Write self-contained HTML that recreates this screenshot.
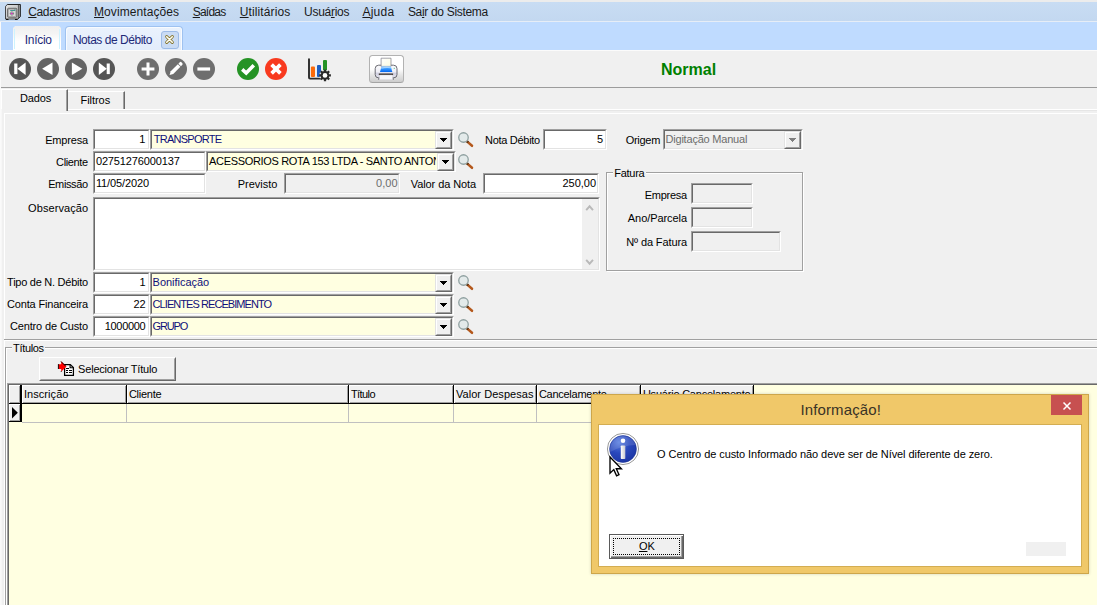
<!DOCTYPE html>
<html lang="pt-BR">
<head>
<meta charset="utf-8">
<title>Notas de Débito</title>
<style>
html,body{margin:0;padding:0;}
body{width:1097px;height:605px;overflow:hidden;position:relative;background:#f0f0f0;font-family:"Liberation Sans",sans-serif;font-size:11px;color:#000;}
.abs{position:absolute;}
svg{position:absolute;overflow:visible;}
.lbl{position:absolute;white-space:nowrap;font-size:11px;}
.mn{position:absolute;white-space:nowrap;font-size:12px;color:#1a1a1a;}
.fld{position:absolute;box-sizing:border-box;background:#fff;border:1px solid;border-color:#a0a0a0 #fff #fff #a0a0a0;overflow:hidden;}
.fld:before{content:"";position:absolute;left:0;top:0;right:0;bottom:0;border:1px solid;border-color:#696969 #e3e3e3 #e3e3e3 #696969;}
.y{background:#ffffe1;}
.g{background:#f0f0f0;}
.dd{position:absolute;box-sizing:border-box;width:17px;height:18px;background:#f0f0f0;border:1px solid;border-color:#e3e3e3 #696969 #696969 #e3e3e3;}
.dd:before{content:"";position:absolute;left:0;top:0;right:0;bottom:0;border:1px solid;border-color:#fff #a0a0a0 #a0a0a0 #fff;}
.dd:after{content:"";position:absolute;left:4px;top:6px;width:7px;height:4px;background:linear-gradient(#000,#000) 0 0/7px 1px no-repeat,linear-gradient(#000,#000) 1px 1px/5px 1px no-repeat,linear-gradient(#000,#000) 2px 2px/3px 1px no-repeat,linear-gradient(#000,#000) 3px 3px/1px 1px no-repeat;}
.dd.dis:after{filter:invert(0.5);}
.grp{position:absolute;box-sizing:border-box;border:1px solid #a0a0a0;box-shadow:1px 1px 0 #fff, inset 1px 1px 0 #fff;}
.gl{position:absolute;background:#f0f0f0;height:3px;}
.btn{position:absolute;box-sizing:border-box;background:#f0f0f0;border:1px solid;border-color:#fff #696969 #696969 #fff;}
.btn:before{content:"";position:absolute;left:0;top:0;right:0;bottom:0;border:1px solid;border-color:#f0f0f0 #a0a0a0 #a0a0a0 #f0f0f0;}
.hc{position:absolute;top:385px;height:18px;box-sizing:content-box;background:#f0f0f0;border-right:1px solid #000;border-bottom:1px solid #000;box-shadow:inset 1px 1px 0 #fff, inset -1px -1px 0 #a0a0a0;}
.vl{position:absolute;top:404px;width:1px;height:18px;background:#c0c0c0;}
</style>
</head>
<body>
<div class="abs" style="left:0;top:0;width:1097px;height:2px;background:#ececec"></div>
<div class="abs" style="left:0;top:2px;width:1097px;height:19px;background:linear-gradient(#c8dcf3,#c3d8f0)"></div>
<div class="abs" style="left:0;top:21px;width:1097px;height:1px;background:#e6edf6"></div>
<div class="abs" style="left:0;top:50px;width:1097px;height:1px;background:#fbfbfb"></div>
<svg style="left:5px;top:4px" width="17" height="17" viewBox="0 0 17 17">
<defs><linearGradient id="sf" x1="0" y1="0" x2="1" y2="1"><stop offset="0" stop-color="#e2e2e2"/><stop offset="1" stop-color="#b4b4b4"/></linearGradient></defs>
<path d="M0.6 2.2 L2.4 0.5 H15.4 V12.6 L13 14.9 H0.6 Z" fill="#9a9a9a" stroke="#161616" stroke-width="0.9" stroke-linejoin="round"/>
<path d="M0.9 2.4 L2.4 1 H13.2 V14.5 H0.9 Z" fill="url(#sf)"/>
<path d="M13.4 1 V14.6" stroke="#3c3c3c" stroke-width="0.7"/>
<rect x="2.6" y="4.3" width="9.2" height="8.9" rx="0.8" fill="#cfcfcf" stroke="#4a4a4a" stroke-width="0.8"/>
<rect x="3.6" y="5.2" width="7.2" height="7.1" fill="#d9d9d9" stroke="#8a8a8a" stroke-width="0.4"/>
<path d="M5.2 6 H9.6 V5.2 H10.3 V6.8 H5.2 Z" fill="#15867e"/>
<circle cx="6.9" cy="9.5" r="1.7" fill="#f2f2f2" stroke="#555" stroke-width="0.5"/>
<path d="M5.2 9.5 H8.8 M6.9 7.9 V11.2" stroke="#444" stroke-width="0.5"/>
<rect x="6" y="8.9" width="1.4" height="1.3" fill="#f018d8"/>
<rect x="0.9" y="15" width="2.6" height="1" fill="#161616"/><rect x="10" y="15" width="2.6" height="1" fill="#161616"/>
</svg>
<div class="mn" style="top:5.04px;line-height:14px;font-size:12px;letter-spacing:-0.338px;left:28.20px;"><u>C</u>adastros</div>
<div class="mn" style="top:5.04px;line-height:14px;font-size:12px;letter-spacing:0.079px;left:94.00px;"><u>M</u>ovimentações</div>
<div class="mn" style="top:5.04px;line-height:14px;font-size:12px;letter-spacing:-0.755px;left:192.70px;"><u>S</u>aídas</div>
<div class="mn" style="top:5.04px;line-height:14px;font-size:12px;letter-spacing:0.114px;left:239.80px;"><u>U</u>tilitários</div>
<div class="mn" style="top:5.04px;line-height:14px;font-size:12px;letter-spacing:-0.294px;left:304.10px;">Usuá<u>r</u>ios</div>
<div class="mn" style="top:5.04px;line-height:14px;font-size:12px;letter-spacing:0.274px;left:362.40px;"><u>A</u>juda</div>
<div class="mn" style="top:5.04px;line-height:14px;font-size:12px;letter-spacing:-0.316px;left:407.90px;">Sa<u>i</u>r do Sistema</div>
<div class="abs" style="left:0;top:22px;width:1097px;height:28px;background:#bfdbff"></div>
<div class="abs" style="left:13px;top:26px;width:48px;height:25px;background:linear-gradient(#efefef,#f4f4f4 30%,#ffffff 62%);clip-path:polygon(0 2px,2px 0,46px 0,48px 2px,48px 100%,0 100%)"></div>
<div class="abs" style="left:14px;top:29px;width:1px;height:20px;background:#cdf3ff"></div><div class="abs" style="left:59px;top:29px;width:1px;height:20px;background:#cdf3ff"></div>
<div class="mn" style="top:32.64px;line-height:14px;font-size:12px;letter-spacing:-0.277px;color:#1e2a78;left:24.70px;">Início</div>
<div class="abs" style="left:65px;top:26px;width:118px;height:24px;box-sizing:border-box;border:1px solid #9fc2f0;border-bottom:none;border-radius:4px 4px 0 0;background:linear-gradient(#eaf2fd,#e3edfb);box-shadow:inset 1px 1px 0 #f8fbff, inset -1px 0 0 #f8fbff"></div>
<div class="mn" style="top:32.64px;line-height:14px;font-size:12px;letter-spacing:-0.469px;color:#1e2a78;left:72.90px;">Notas de Débito</div>
<div class="abs" style="left:161px;top:31px;width:18px;height:18px;box-sizing:border-box;border:1px solid #9dbbe6;border-radius:3px;background:#c9dbf4"></div>
<svg style="left:161px;top:31px" width="18" height="18" viewBox="0 0 18 18"><path d="M5.7 5.7 L11.3 11.3 M11.3 5.7 L5.7 11.3" stroke="#85752c" stroke-width="3.1" stroke-linecap="round"/><path d="M5.7 5.7 L11.3 11.3 M11.3 5.7 L5.7 11.3" stroke="#fffef4" stroke-width="1.55" stroke-linecap="round"/></svg>
<div class="abs" style="left:0;top:87px;width:1097px;height:1px;background:#9c9c9c"></div>
<svg style="left:9px;top:58px" width="22" height="22" viewBox="0 0 22 22"><circle cx="11" cy="11" r="11" fill="#555555"/><rect x="5.2" y="5.5" width="3.2" height="10.6" fill="#fff"/><path d="M16.6 4.5 V16.9 L8.4 10.7 Z" fill="#fff"/></svg>
<svg style="left:37px;top:58px" width="22" height="22" viewBox="0 0 22 22"><circle cx="11" cy="11" r="11" fill="#646464"/><path d="M15.5 4.5 V16.9 L5.1 10.7 Z" fill="#fff"/></svg>
<svg style="left:65px;top:58px" width="22" height="22" viewBox="0 0 22 22"><circle cx="11" cy="11" r="11" fill="#646464"/><path d="M6.9 4.5 V16.9 L17.3 10.7 Z" fill="#fff"/></svg>
<svg style="left:93px;top:58px" width="22" height="22" viewBox="0 0 22 22"><circle cx="11" cy="11" r="11" fill="#555555"/><rect x="13.7" y="5.5" width="3.1" height="10.6" fill="#fff"/><path d="M5.8 4.5 V16.9 L13.8 10.7 Z" fill="#fff"/></svg>
<svg style="left:137px;top:58px" width="22" height="22" viewBox="0 0 22 22"><circle cx="11" cy="11" r="11" fill="#6e6e6e"/><path d="M11 4.6 V17.4 M4.6 11 H17.4" stroke="#fff" stroke-width="3"/></svg>
<svg style="left:165px;top:58px" width="22" height="22" viewBox="0 0 22 22"><circle cx="11" cy="11" r="11" fill="#6e6e6e"/><g transform="translate(10.8,10.8) rotate(-45)"><path d="M-8.8 0 L-5.4 -1.8 H4.7 V1.8 H-5.4 Z" fill="#fff"/><path d="M5.5 -1.8 H7.4 Q8.6 -1.8 8.6 -0.6 V0.6 Q8.6 1.8 7.4 1.8 H5.5 Z" fill="#fff"/></g></svg>
<svg style="left:193px;top:58px" width="22" height="22" viewBox="0 0 22 22"><circle cx="11" cy="11" r="11" fill="#6e6e6e"/><path d="M4.4 11 H17.1" stroke="#fff" stroke-width="3.2"/></svg>
<svg style="left:237px;top:58px" width="22" height="22" viewBox="0 0 22 22"><circle cx="11" cy="11" r="11" fill="#259325"/><path d="M5.2 11.4 L9.2 15 L16.8 7.2" fill="none" stroke="#fff" stroke-width="3.5"/></svg>
<svg style="left:265px;top:58px" width="22" height="22" viewBox="0 0 22 22"><circle cx="11" cy="11" r="11" fill="#f83a1f"/><path d="M6.6 6.6 L15.4 15.4 M15.4 6.6 L6.6 15.4" stroke="#fff" stroke-width="3.7"/></svg>
<svg style="left:306px;top:57px" width="26" height="26" viewBox="0 0 26 26">
<path d="M3 2.2 V20.6 Q3 21.6 4 21.6 H14.6" fill="none" stroke="#2a2a2a" stroke-width="1.9" stroke-linecap="round"/>
<rect x="4.9" y="9.6" width="4.1" height="10.4" rx="1" fill="#fb6a0a"/>
<rect x="11" y="7.9" width="4" height="12.1" rx="1" fill="#1c5ec2"/>
<rect x="17" y="3" width="4" height="12.4" rx="1" fill="#259325"/>
<g transform="translate(19,18.4)">
<circle r="5.7" fill="#f0f0f0" opacity="0.85"/>
<circle r="4.3" fill="#2a2a2a"/>
<g stroke="#2a2a2a" stroke-width="2.3"><path d="M0 -5.9 V5.9 M-5.9 0 H5.9 M-4.15 -4.15 L4.15 4.15 M4.15 -4.15 L-4.15 4.15"/></g>
<circle r="2.35" fill="#ffffff"/>
</g></svg>
<div class="abs" style="left:369px;top:55px;width:35px;height:28px;box-sizing:border-box;border:1px solid #b2b2b2;border-bottom-color:#a4a4a4;border-radius:3.5px;background:linear-gradient(#ffffff 0%,#ffffff 50%,#e6e6e6 72%,#cdcdcd 100%)"></div>
<svg style="left:369px;top:55px" width="35" height="28" viewBox="0 0 35 28">
<defs><linearGradient id="pb" x1="0" y1="0" x2="0" y2="1"><stop offset="0" stop-color="#fbfbfd"/><stop offset="0.55" stop-color="#eeeef6"/><stop offset="0.62" stop-color="#cfcfe0"/><stop offset="1" stop-color="#e4e4ee"/></linearGradient>
<linearGradient id="bl" x1="0" y1="0" x2="0" y2="1"><stop offset="0" stop-color="#a8d6ff"/><stop offset="0.4" stop-color="#3a9cff"/><stop offset="1" stop-color="#0468f4"/></linearGradient>
<linearGradient id="pp" x1="0" y1="0" x2="1" y2="1"><stop offset="0" stop-color="#ffffff"/><stop offset="1" stop-color="#fdfde0"/></linearGradient></defs>
<path d="M9.6 10.2 H24.6 Q28 10.2 28 13.6 V19.6 Q28 22.8 24.8 22.8 H9.4 Q6.2 22.8 6.2 19.6 V13.6 Q6.2 10.2 9.6 10.2 Z" fill="url(#pb)" stroke="#5c5c64" stroke-width="0.9"/>
<path d="M12.1 11.4 V3.2 H22 V11.4 Z" fill="url(#pp)" stroke="#7c7c88" stroke-width="0.7"/>
<path d="M12.6 11.2 H21.8 L23.3 16.9 H11 Z" fill="url(#bl)"/>
<path d="M12.6 12.4 Q17 11.2 21.9 12.2 L22.2 13.4 Q17 12.6 12.2 14 Z" fill="#d6ecff" opacity="0.55"/>
<rect x="9.8" y="18.5" width="14.3" height="1.5" fill="#3c3634"/>
<path d="M10.6 20 H23.5 L23.9 24.7 H10.1 Z" fill="#f7f7fb" stroke="#c4c4d0" stroke-width="0.4"/>
<path d="M9.7 22.8 V25 M24.3 22.8 V25" stroke="#6a6a74" stroke-width="0.7"/>
<rect x="24.7" y="12.8" width="1.3" height="1.1" fill="#7fd0a8"/>
</svg>
<div class="lbl" style="top:59.66px;line-height:19px;font-size:16px;letter-spacing:-0.025px;color:#008000;font-weight:bold;left:661.10px;">Normal</div>
<div class="abs" style="left:1px;top:89px;width:67px;height:22px;box-sizing:border-box;border-top:1px solid #fff;border-left:1px solid #fff;border-right:1px solid #696969;box-shadow:inset -1px 0 0 #a0a0a0"></div>
<div class="abs" style="left:68px;top:91px;width:57px;height:18px;box-sizing:border-box;border-top:1px solid #fff;border-right:1px solid #696969;box-shadow:inset -1px 0 0 #a0a0a0"></div>
<div class="abs" style="left:68px;top:109px;width:1029px;height:1px;background:#fff"></div>
<div class="abs" style="left:68px;top:110px;width:1029px;height:1px;background:#e6e6e6"></div>
<div class="abs" style="left:0px;top:22px;width:1px;height:583px;background:#fafafa"></div><div class="abs" style="left:1px;top:109px;width:1px;height:496px;background:#f7f7f7"></div>
<div class="lbl" style="top:92.29px;line-height:13px;letter-spacing:-0.099px;left:19.90px;">Dados</div>
<div class="lbl" style="top:94.29px;line-height:13px;letter-spacing:-0.042px;left:80.50px;">Filtros</div>
<div class="abs" style="left:4px;top:113px;width:1093px;height:1px;background:#fff"></div>
<div class="abs" style="left:4px;top:113px;width:1px;height:492px;background:#fff"></div>
<div class="abs" style="left:4px;top:339px;width:1093px;height:1px;background:#a0a0a0"></div>
<div class="abs" style="left:4px;top:340px;width:1093px;height:1px;background:#fff"></div>
<div class="lbl" style="top:134.09px;line-height:13px;letter-spacing:-0.172px;right:1009.07px;">Empresa</div>
<div class="fld " style="left:93px;top:129px;width:57px;height:21px"></div>
<div class="lbl" style="top:132.99px;line-height:13px;right:951.70px;">1</div>
<div class="fld y" style="left:150px;top:129px;width:304px;height:21px"></div>
<div class="lbl" style="top:132.99px;line-height:13px;letter-spacing:-0.720px;color:#10107a;left:153.70px;">TRANSPORTE</div>
<i class="dd" style="left:435px;top:131px;height:18px"></i>
<svg style="left:457.2px;top:130.9px" width="18" height="18" viewBox="0 0 18 18"><path d="M10.3 10.6 L15 14.8" stroke="#b4581c" stroke-width="2.5" stroke-linecap="round"/><path d="M10 10.3 L11.2 11.4" stroke="#5a3414" stroke-width="2.4"/><circle cx="6.5" cy="6.5" r="4.75" fill="#e3eaea" stroke="#8fa0a0" stroke-width="1.3"/></svg>
<div class="lbl" style="top:134.09px;line-height:13px;letter-spacing:-0.289px;left:485.00px;">Nota Débito</div>
<div class="fld " style="left:543px;top:129px;width:64px;height:21px"></div>
<div class="lbl" style="top:132.79px;line-height:13px;right:493.80px;">5</div>
<div class="lbl" style="top:134.09px;line-height:13px;letter-spacing:-0.292px;left:625.70px;">Origem</div>
<div class="fld g" style="left:663px;top:129px;width:140px;height:21px"></div>
<div class="lbl" style="top:133.09px;line-height:13px;letter-spacing:-0.207px;color:#6d6d6d;left:665.50px;">Digitação Manual</div>
<i class="dd dis" style="left:784px;top:131px;height:18px"></i>
<div class="lbl" style="top:156.09px;line-height:13px;letter-spacing:-0.375px;right:1009.27px;">Cliente</div>
<div class="fld " style="left:93px;top:151px;width:113px;height:21px"></div>
<div class="lbl" style="top:155.09px;line-height:13px;letter-spacing:-0.127px;left:95.90px;">02751276000137</div>
<div class="fld y" style="left:206px;top:151px;width:250px;height:21px"></div>
<div class="abs" style="left:208px;top:153px;width:228px;height:17px;overflow:hidden"><div class="lbl" style="top:1.59px;line-height:13px;left:1.10px;letter-spacing:-0.337px;">ACESSORIOS ROTA 153 LTDA - SANTO ANTONIO</div></div>
<i class="dd" style="left:437px;top:153px;height:18px"></i>
<svg style="left:457.2px;top:152.9px" width="18" height="18" viewBox="0 0 18 18"><path d="M10.3 10.6 L15 14.8" stroke="#b4581c" stroke-width="2.5" stroke-linecap="round"/><path d="M10 10.3 L11.2 11.4" stroke="#5a3414" stroke-width="2.4"/><circle cx="6.5" cy="6.5" r="4.75" fill="#e3eaea" stroke="#8fa0a0" stroke-width="1.3"/></svg>
<div class="lbl" style="top:178.09px;line-height:13px;letter-spacing:-0.365px;right:1009.26px;">Emissão</div>
<div class="fld " style="left:93px;top:173px;width:113px;height:21px"></div>
<div class="lbl" style="top:177.09px;line-height:13px;letter-spacing:-0.106px;left:95.90px;">11/05/2020</div>
<div class="lbl" style="top:178.09px;line-height:13px;letter-spacing:0.007px;left:237.70px;">Previsto</div>
<div class="fld g" style="left:284px;top:173px;width:116px;height:21px"></div>
<div class="lbl" style="top:176.89px;line-height:13px;letter-spacing:-0.007px;color:#6d6d6d;right:699.51px;">0,00</div>
<div class="lbl" style="top:178.09px;line-height:13px;letter-spacing:-0.096px;left:410.80px;">Valor da Nota</div>
<div class="fld " style="left:483px;top:173px;width:116px;height:21px"></div>
<div class="lbl" style="top:176.69px;line-height:13px;letter-spacing:-0.031px;right:501.03px;">250,00</div>
<div class="lbl" style="top:202.09px;line-height:13px;letter-spacing:0.076px;right:1008.82px;">Observação</div>
<div class="fld " style="left:93px;top:197px;width:507px;height:74px"></div>
<div class="abs" style="left:582px;top:199px;width:16px;height:70px;background:#f0f0f0"></div>
<svg style="left:585px;top:204px" width="10" height="8" viewBox="0 0 10 8"><path d="M1.2 6.2 L4.6 2.3 L8 6.2" fill="none" stroke="#b9b9b9" stroke-width="1.9"/></svg>
<svg style="left:585px;top:258px" width="10" height="8" viewBox="0 0 10 8"><path d="M1.2 1.8 L4.6 5.7 L8 1.8" fill="none" stroke="#b9b9b9" stroke-width="1.9"/></svg>
<div class="grp" style="left:606px;top:172px;width:197px;height:99px"></div>
<div class="gl" style="left:613px;top:171px;width:33px"></div>
<div class="lbl" style="top:167.09px;line-height:13px;letter-spacing:-0.279px;left:614.30px;">Fatura</div>
<div class="lbl" style="top:189.09px;line-height:13px;letter-spacing:-0.272px;right:410.17px;">Empresa</div>
<div class="fld g" style="left:691px;top:183px;width:62px;height:21px"></div>
<div class="lbl" style="top:212.09px;line-height:13px;letter-spacing:-0.064px;right:409.96px;">Ano/Parcela</div>
<div class="fld g" style="left:691px;top:207px;width:62px;height:21px"></div>
<div class="lbl" style="top:236.09px;line-height:13px;letter-spacing:-0.110px;right:410.01px;">Nº da Fatura</div>
<div class="fld g" style="left:691px;top:231px;width:90px;height:21px"></div>
<div class="lbl" style="top:276.09px;line-height:13px;letter-spacing:-0.263px;right:1009.16px;">Tipo de N. Débito</div>
<div class="fld " style="left:93px;top:272px;width:57px;height:21px"></div>
<div class="lbl" style="top:276.09px;line-height:13px;right:951.30px;">1</div>
<div class="fld y" style="left:150px;top:272px;width:304px;height:21px"></div>
<div class="lbl" style="top:276.09px;line-height:13px;letter-spacing:-0.027px;color:#10107a;left:152.60px;">Bonificação</div>
<i class="dd" style="left:435px;top:274px;height:18px"></i>
<svg style="left:457.2px;top:274.0px" width="18" height="18" viewBox="0 0 18 18"><path d="M10.3 10.6 L15 14.8" stroke="#b4581c" stroke-width="2.5" stroke-linecap="round"/><path d="M10 10.3 L11.2 11.4" stroke="#5a3414" stroke-width="2.4"/><circle cx="6.5" cy="6.5" r="4.75" fill="#e3eaea" stroke="#8fa0a0" stroke-width="1.3"/></svg>
<div class="lbl" style="top:298.09px;line-height:13px;letter-spacing:-0.185px;right:1009.09px;">Conta Financeira</div>
<div class="fld " style="left:93px;top:294px;width:57px;height:21px"></div>
<div class="lbl" style="top:298.09px;line-height:13px;right:951.30px;">22</div>
<div class="fld y" style="left:150px;top:294px;width:304px;height:21px"></div>
<div class="lbl" style="top:298.09px;line-height:13px;letter-spacing:-0.938px;color:#10107a;left:152.60px;">CLIENTES RECEBIMENTO</div>
<i class="dd" style="left:435px;top:296px;height:18px"></i>
<svg style="left:457.2px;top:296.0px" width="18" height="18" viewBox="0 0 18 18"><path d="M10.3 10.6 L15 14.8" stroke="#b4581c" stroke-width="2.5" stroke-linecap="round"/><path d="M10 10.3 L11.2 11.4" stroke="#5a3414" stroke-width="2.4"/><circle cx="6.5" cy="6.5" r="4.75" fill="#e3eaea" stroke="#8fa0a0" stroke-width="1.3"/></svg>
<div class="lbl" style="top:320.09px;line-height:13px;letter-spacing:-0.136px;right:1009.04px;">Centro de Custo</div>
<div class="fld " style="left:93px;top:316px;width:57px;height:21px"></div>
<div class="lbl" style="top:320.09px;line-height:13px;letter-spacing:-0.305px;right:951.60px;">1000000</div>
<div class="fld y" style="left:150px;top:316px;width:304px;height:21px"></div>
<div class="lbl" style="top:320.09px;line-height:13px;letter-spacing:-1.186px;color:#10107a;left:152.60px;">GRUPO</div>
<i class="dd" style="left:435px;top:318px;height:18px"></i>
<svg style="left:457.2px;top:318.0px" width="18" height="18" viewBox="0 0 18 18"><path d="M10.3 10.6 L15 14.8" stroke="#b4581c" stroke-width="2.5" stroke-linecap="round"/><path d="M10 10.3 L11.2 11.4" stroke="#5a3414" stroke-width="2.4"/><circle cx="6.5" cy="6.5" r="4.75" fill="#e3eaea" stroke="#8fa0a0" stroke-width="1.3"/></svg>
<div class="grp" style="left:5px;top:347px;width:1100px;height:270px"></div>
<div class="gl" style="left:12px;top:346px;width:33px"></div>
<div class="lbl" style="top:342.09px;line-height:13px;letter-spacing:-0.336px;left:13.10px;">Títulos</div>
<div class="btn" style="left:39px;top:357px;width:137px;height:24px"></div>
<svg style="left:58px;top:361px" width="17" height="15" viewBox="0 0 17 15">
<path d="M6.6 3.5 H12.3 L15.4 6.6 V14.4 H6.6 Z" fill="#fff" stroke="#000" stroke-width="1.25" stroke-linejoin="miter"/>
<path d="M12.1 3.8 V6.8 H15.2" fill="none" stroke="#000" stroke-width="1.1"/>
<path d="M8 7.5 H11 M8 9.5 H10 M11 9.5 H14 M8 11.5 H10 M11 11.5 H14" stroke="#000" stroke-width="1"/>
<path d="M0.3 3.2 H3.2 V0.2 L8.5 5.5 L3.2 10.8 V7.9 H0.3 Z" fill="#ff0000"/>
<path d="M0.4 8 V3.1 M3 0.5 L7.6 5.1 M3.2 10.8 V10" fill="none" stroke="#000" stroke-width="0.9"/>
</svg>
<div class="lbl" style="top:363.09px;line-height:13px;letter-spacing:-0.197px;left:78.10px;">Selecionar Título</div>
<div class="abs" style="left:7px;top:383px;width:1090px;height:222px;background:#ffffe1"></div>
<div class="abs" style="left:7px;top:383px;width:1090px;height:1px;background:#a0a0a0"></div>
<div class="abs" style="left:7px;top:383px;width:1px;height:222px;background:#a0a0a0"></div>
<div class="abs" style="left:8px;top:384px;width:1089px;height:1px;background:#696969"></div>
<div class="abs" style="left:8px;top:384px;width:1px;height:221px;background:#696969"></div>
<div class="hc" style="left:9px;width:12px;width:11px;border-right-width:2px"></div>
<div class="hc" style="left:22px;width:104px"></div>
<div class="lbl" style="top:388.09px;line-height:13px;letter-spacing:0.071px;left:23.90px;">Inscrição</div>
<div class="hc" style="left:127px;width:221px"></div>
<div class="lbl" style="top:388.09px;line-height:13px;letter-spacing:-0.258px;left:128.90px;">Cliente</div>
<div class="hc" style="left:349px;width:104px"></div>
<div class="lbl" style="top:388.09px;line-height:13px;letter-spacing:-0.563px;left:350.90px;">Título</div>
<div class="hc" style="left:454px;width:82px"></div>
<div class="lbl" style="top:388.09px;line-height:13px;letter-spacing:0.058px;left:455.90px;">Valor Despesas</div>
<div class="hc" style="left:537px;width:103px"></div>
<div class="lbl" style="top:388.09px;line-height:13px;letter-spacing:-0.267px;left:538.90px;">Cancelamento</div>
<div class="hc" style="left:641px;width:112px"></div>
<div class="lbl" style="top:388.09px;line-height:13px;letter-spacing:-0.215px;left:642.90px;">Usuário Cancelamento</div>
<div class="vl" style="left:126px"></div>
<div class="vl" style="left:348px"></div>
<div class="vl" style="left:453px"></div>
<div class="vl" style="left:536px"></div>
<div class="vl" style="left:640px"></div>
<div class="vl" style="left:753px"></div>
<div class="abs" style="left:22px;top:422px;width:732px;height:1px;background:#c0c0c0"></div>
<div class="abs" style="left:9px;top:404px;width:11px;height:17px;background:#f0f0f0;border-right:2px solid #000;border-bottom:1px solid #000;box-shadow:inset 1px 1px 0 #fff, inset -1px -1px 0 #a0a0a0"></div>
<svg style="left:12px;top:407px" width="6" height="12" viewBox="0 0 6 12"><path d="M0 0 V11.4 L5.8 5.7 Z" fill="#000"/></svg>
<div class="abs" style="left:591px;top:394px;width:498px;height:180px;box-sizing:border-box;background:#f0c869;border:1px solid #cda64b;box-shadow:0 0 3px rgba(0,0,0,0.18)"></div>
<div class="abs" style="left:598px;top:424px;width:484px;height:143px;box-sizing:border-box;background:#fff;border:1px solid #d3ad52"></div>
<div class="lbl" style="top:400.60px;line-height:18px;font-size:15px;letter-spacing:0.118px;color:#3a3326;left:800.50px;">Informação!</div>
<div class="abs" style="left:1051px;top:395px;width:31px;height:20px;background:#c75050"></div>
<svg style="left:1063px;top:402px" width="8" height="8" viewBox="0 0 8 8"><path d="M0.5 0.5 L7.5 7.5 M7.5 0.5 L0.5 7.5" stroke="#fff" stroke-width="1.5"/></svg>
<svg style="left:607px;top:433px" width="32" height="32" viewBox="0 0 32 32">
<defs><radialGradient id="ig" cx="0.35" cy="0.25" r="0.9"><stop offset="0" stop-color="#5a7fe0"/><stop offset="0.45" stop-color="#2a48bc"/><stop offset="1" stop-color="#17309e"/></radialGradient>
<linearGradient id="is" x1="0" y1="0" x2="1" y2="0"><stop offset="0" stop-color="#ffffff"/><stop offset="1" stop-color="#c8c8d0"/></linearGradient></defs>
<circle cx="16" cy="16" r="15.6" fill="#fdfdfd" stroke="#8e8e8e" stroke-width="0.9"/>
<circle cx="16" cy="16" r="13.4" fill="url(#ig)" stroke="#1d3494" stroke-width="0.6"/>
<path d="M3.2 19 A13.2 13.2 0 0 1 28.6 12 Q16 12 3.2 19 Z" fill="#ffffff" opacity="0.13"/>
<circle cx="16" cy="7.8" r="2.3" fill="#fff"/>
<rect x="13.8" y="12.4" width="4.5" height="13.6" rx="0.8" fill="url(#is)"/>
</svg>
<svg style="left:609px;top:456px" width="14" height="21" viewBox="0 0 14 21"><path d="M1 1 V17.2 L4.8 13.6 L7.6 19.8 L10 18.7 L7.3 12.7 H12.4 Z" fill="#fff" stroke="#000" stroke-width="1.35" stroke-linejoin="miter"/></svg>
<div class="lbl" style="top:448.09px;line-height:13px;letter-spacing:-0.072px;left:657.10px;">O Centro de custo Informado não deve ser de Nível diferente de zero.</div>
<div class="abs" style="left:609px;top:534px;width:75px;height:25px;box-sizing:border-box;background:#f0f0f0;border:1px solid #5a5a5a;box-shadow:inset 1px 1px 0 #fff, inset -1px -1px 0 #696969, inset -2px -2px 0 #a0a0a0"></div>
<div class="abs" style="left:613px;top:538px;width:67px;height:17px;box-sizing:border-box;border:1px dotted #000"></div>
<div class="lbl" style="top:540.29px;line-height:13px;left:638.90px;"><u>O</u>K</div>
<div class="abs" style="left:1026px;top:542px;width:40px;height:14px;background:#f0f0f0"></div>
</body>
</html>
